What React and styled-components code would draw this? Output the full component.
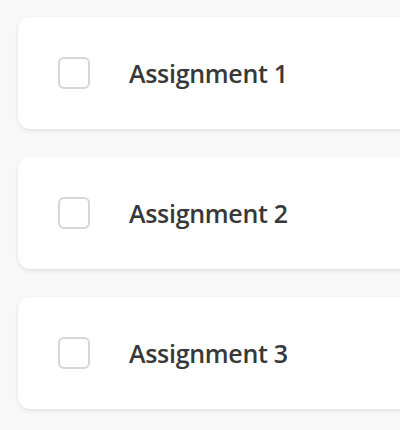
import React from 'react';
import styled, { createGlobalStyle } from 'styled-components';

const GlobalStyle = createGlobalStyle`
  body {
    margin: 0;
    background: #f8f8f8;
    font-family: "Open Sans", "Noto Sans", sans-serif;
  }
`;

const List = styled.div`
  display: flex;
  flex-direction: column;
  gap: 28px;
  padding: 17px 0 0 18px;
  overflow: hidden;
  height: 430px;
  box-sizing: border-box;
`;

const Card = styled.div`
  display: flex;
  align-items: center;
  gap: 39px;
  height: 112px;
  width: 420px;
  flex-shrink: 0;
  box-sizing: border-box;
  padding-left: 40px;
  background: #fff;
  border-radius: 12px;
  box-shadow: 0 2px 4px rgba(0, 0, 0, 0.09), 0 0 2px rgba(0, 0, 0, 0.03);
`;

const Checkbox = styled.span`
  width: 32px;
  height: 32px;
  box-sizing: border-box;
  border: 2px solid #d6d6d6;
  border-radius: 6px;
  flex-shrink: 0;
`;

const Title = styled.span`
  font-size: 25px;
  font-weight: 600;
  color: #383838;
  letter-spacing: -0.3px;
`;

const items = ['Assignment 1', 'Assignment 2', 'Assignment 3'];

export default function App() {
  return (
    <>
      <GlobalStyle />
      <List>
        {items.map((name) => (
          <Card key={name}>
            <Checkbox />
            <Title>{name}</Title>
          </Card>
        ))}
      </List>
    </>
  );
}
